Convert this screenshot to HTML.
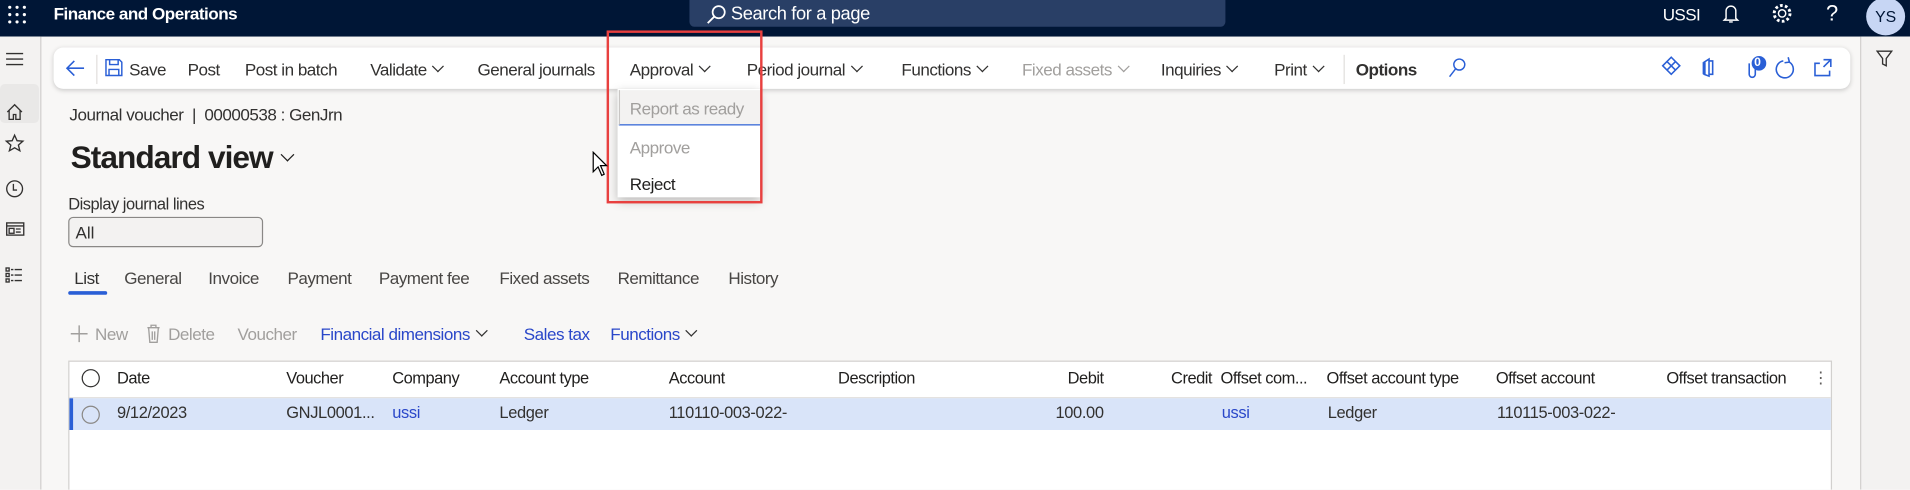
<!DOCTYPE html>
<html><head><meta charset="utf-8"><style>
*{margin:0;padding:0;box-sizing:border-box}
html,body{width:1910px;height:490px;overflow:hidden;background:#f8f7f6}
#s{position:absolute;left:0;top:0;width:1568px;height:402px;transform:scale(1.21811);transform-origin:0 0;font-family:"Liberation Sans",sans-serif;color:#323130;background:#f8f7f6;overflow:hidden}
.a{position:absolute;white-space:nowrap}
.t{font-size:14px;letter-spacing:-0.4px}
.g{color:#a19f9d}
.b{color:#2a47c9}
.ch{display:inline-block;width:7px;height:7px;border-right:1.3px solid currentColor;border-bottom:1.3px solid currentColor;transform:rotate(45deg);margin-left:6px;position:relative;top:-4px}
.hd{font-size:13.5px;letter-spacing:-0.4px;color:#201f1e;top:303px}
.rw{font-size:13.5px;letter-spacing:-0.3px;top:331px}
</style></head><body><div id="s">
<div class="a" style="left:0;top:0;width:1568px;height:30px;background:#001636"></div>
<svg class="a" style="left:6px;top:4px" width="16" height="16"><g fill="#fff"><circle cx="2" cy="2" r="1.3"/><circle cx="8" cy="2" r="1.3"/><circle cx="14" cy="2" r="1.3"/><circle cx="2" cy="8" r="1.3"/><circle cx="8" cy="8" r="1.3"/><circle cx="14" cy="8" r="1.3"/><circle cx="2" cy="14" r="1.3"/><circle cx="8" cy="14" r="1.3"/><circle cx="14" cy="14" r="1.3"/></g></svg>
<div class="a" style="left:44px;top:3px;color:#fff;font-weight:bold;font-size:14px;letter-spacing:-0.4px">Finance and Operations</div>
<div class="a" style="left:566px;top:0;width:440px;height:22px;background:#293f66;border-radius:0 0 4px 4px"></div>
<svg class="a" style="left:579px;top:3px" width="18" height="18"><circle cx="11" cy="7" r="5" fill="none" stroke="#fff" stroke-width="1.4"/><path d="M7.5 10.5L2 16" stroke="#fff" stroke-width="1.5"/></svg>
<div class="a" style="left:600px;top:3px;color:#fff;font-size:15px;letter-spacing:-0.3px">Search for a page</div>
<div class="a" style="left:1365px;top:4px;color:#fff;font-size:14px;letter-spacing:-0.5px">USSI</div>
<svg class="a" style="left:1413px;top:2px" width="16" height="18"><path d="M4 13V7a4 4 0 0 1 8 0v6l1.5 1.5h-11z M6.5 16h3" fill="none" stroke="#fff" stroke-width="1.2"/></svg>
<svg class="a" style="left:1454px;top:2px" width="18" height="18"><circle cx="9" cy="9" r="3" fill="none" stroke="#fff" stroke-width="1.2"/><circle cx="9" cy="9" r="6.5" fill="none" stroke="#fff" stroke-width="2.4" stroke-dasharray="2.2 1.9"/></svg>
<div class="a" style="left:1499px;top:1px;color:#fff;font-size:18px">?</div>
<div class="a" style="left:1532px;top:-2px;width:32px;height:31px;border-radius:50%;background:#c7d6f4;color:#001636;font-size:13px;text-align:center;line-height:31px">YS</div>
<div class="a" style="left:0;top:30px;width:34px;height:372px;background:#f3f2f1;border-right:1px solid #d2d0ce"></div>
<div class="a" style="left:0;top:69px;width:32px;height:32px;background:#e9e8e7;border-radius:4px"></div>
<svg class="a" style="left:0;top:30px" width="34" height="372" fill="none" stroke="#323130" stroke-width="1.1">
<path d="M5 14h14M5 18.5h14M5 23h14"/>
<path d="M6 62l6-6 6 6M7.5 60.5V68h3.5v-4h2v4h3.5v-7.5"/>
<path d="M12 81l2 4.5 4.8.4-3.7 3.2 1.2 4.7L12 91.3 7.7 93.8l1.2-4.7-3.7-3.2 4.8-.4z"/>
<circle cx="12" cy="125" r="6.5"/><path d="M11 121v5h3"/>
<rect x="5.5" y="153" width="14" height="10"/><path d="M5.5 155.5h14"/><rect x="7.5" y="157.5" width="4" height="4"/><path d="M13 158h4M13 160.5h4"/>
<rect x="5" y="190" width="2.5" height="2.5"/><rect x="5" y="194.5" width="2.5" height="2.5"/><rect x="5" y="199" width="2.5" height="2.5"/><path d="M9 191.3h2M12 191.3h6M9 195.8h2M12 195.8h6M9 200.3h2M12 200.3h6"/>
</svg>
<div class="a" style="left:1527px;top:30px;width:41px;height:372px;background:#f3f2f1;border-left:1px solid #d2d0ce"></div>
<svg class="a" style="left:1540px;top:40px" width="14" height="16"><path d="M1 2h12L8.5 8v6l-3-1.5V8z" fill="none" stroke="#323130" stroke-width="1.1"/></svg>
<div class="a" style="left:44px;top:39px;width:1475px;height:34px;background:#fff;border-radius:8px;box-shadow:0 1px 4px rgba(0,0,0,.18)"></div>
<svg class="a" style="left:53px;top:48px" width="18" height="16"><path d="M16 8H2M8 2L2 8l6 6" fill="none" stroke="#2a5fd6" stroke-width="1.3"/></svg>
<div class="a" style="left:79px;top:45px;width:1px;height:24px;background:#e1dfdd"></div>
<svg class="a" style="left:86px;top:48px" width="15" height="15"><path d="M1 1h11l2 2v11H1z M4 1v4h7V1 M3.5 14V9h8v5" fill="none" stroke="#2a5fd6" stroke-width="1.2"/></svg>
<div class="a t" style="left:106px;top:49px">Save</div>
<div class="a t" style="left:154px;top:49px">Post</div>
<div class="a t" style="left:201px;top:49px">Post in batch</div>
<div class="a t" style="left:304px;top:49px">Validate<span class="ch"></span></div>
<div class="a t" style="left:392px;top:49px">General journals</div>
<div class="a t" style="left:517px;top:49px">Approval<span class="ch"></span></div>
<div class="a t" style="left:613px;top:49px">Period journal<span class="ch"></span></div>
<div class="a t" style="left:740px;top:49px">Functions<span class="ch"></span></div>
<div class="a t g" style="left:839px;top:49px">Fixed assets<span class="ch"></span></div>
<div class="a t" style="left:953px;top:49px">Inquiries<span class="ch"></span></div>
<div class="a t" style="left:1046px;top:49px">Print<span class="ch"></span></div>
<div class="a" style="left:1103px;top:45px;width:1px;height:24px;background:#e1dfdd"></div>
<div class="a t" style="left:1113px;top:49px;font-weight:bold">Options</div>
<svg class="a" style="left:1188px;top:47px" width="16" height="17"><circle cx="10" cy="6" r="4.5" fill="none" stroke="#2a5fd6" stroke-width="1.2"/><path d="M7 9.5L2 16" stroke="#2a5fd6" stroke-width="1.2"/></svg>
<svg class="a" style="left:1364px;top:46px" width="150" height="20" fill="none" stroke="#2a5fd6" stroke-width="1.3">
<path d="M8 1l7 7-7 7-7-7z M4.5 4.5l7 7M11.5 4.5l-7 7"/>
<path d="M35 5l4-2.5v14L35 15z M39 4h3v11h-3" /><path d="M35 5v10" stroke-width="2.5"/>
<path d="M72 6v9a2.5 2.5 0 0 0 5 0V5" /><circle cx="80" cy="6" r="6" fill="#2a5fd6" stroke="none"/>
<path d="M100 4a7 7 0 1 0 5 1" /><path d="M104 1l1 4-4 .5"/>
<path d="M130 6h-4v10h12v-4M133 3h6v6M139 3l-6 6"/>
</svg>
<div class="a" style="left:1440px;top:46px;color:#fff;font-size:10px;font-weight:bold">0</div>
<div class="a t" style="left:57px;top:86px">Journal voucher &nbsp;| &nbsp;00000538 : GenJrn</div>
<div class="a" style="left:58px;top:114px;font-size:26px;font-weight:bold;letter-spacing:-0.8px;color:#201f1e">Standard view<span class="ch" style="width:8px;height:8px;top:-7px;border-width:1.3px;margin-left:8px"></span></div>
<div class="a" style="left:56px;top:160px;font-size:13.5px;letter-spacing:-0.4px">Display journal lines</div>
<div class="a" style="left:56px;top:178px;width:160px;height:25px;border:1px solid #8a8886;border-radius:4px;background:#f3f2f1;font-size:14px;padding:4px 5px">All</div>
<div class="a t" style="left:61px;top:220px">List</div>
<div class="a t" style="left:102px;top:220px;color:#484644">General</div>
<div class="a t" style="left:171px;top:220px;color:#484644">Invoice</div>
<div class="a t" style="left:236px;top:220px;color:#484644">Payment</div>
<div class="a t" style="left:311px;top:220px;color:#484644">Payment fee</div>
<div class="a t" style="left:410px;top:220px;color:#484644">Fixed assets</div>
<div class="a t" style="left:507px;top:220px;color:#484644">Remittance</div>
<div class="a t" style="left:598px;top:220px;color:#484644">History</div>
<div class="a" style="left:56px;top:239px;width:32px;height:3px;background:#2a5fd6;border-radius:2px"></div>
<svg class="a" style="left:58px;top:267px" width="14" height="14"><path d="M7 0v14M0 7h14" stroke="#a19f9d" stroke-width="1.2"/></svg>
<div class="a t g" style="left:78px;top:266px">New</div>
<svg class="a" style="left:120px;top:266px" width="12" height="16"><path d="M1 3h10M4 3V1h4v2M2 3l1 12h6l1-12M5 6v7M7 6v7" fill="none" stroke="#a19f9d" stroke-width="1.1"/></svg>
<div class="a t g" style="left:138px;top:266px">Delete</div>
<div class="a t g" style="left:195px;top:266px">Voucher</div>
<div class="a t b" style="left:263px;top:266px">Financial dimensions<span class="ch" style="color:#323130"></span></div>
<div class="a t b" style="left:430px;top:266px">Sales tax</div>
<div class="a t b" style="left:501px;top:266px">Functions<span class="ch" style="color:#323130"></span></div>
<div class="a" style="left:56px;top:296px;width:1448px;height:120px;background:#fff;border:1px solid #d2d0ce"></div>
<div class="a" style="left:57px;top:326px;width:1446px;height:1px;background:#e1dfdd"></div>
<div class="a" style="left:57px;top:327px;width:1446px;height:26px;background:#d9e4f9;border-left:3px solid #2a5fd6"></div>
<div class="a" style="left:67px;top:303px;width:15px;height:15px;border:1.2px solid #323130;border-radius:50%"></div>
<div class="a" style="left:67px;top:333px;width:15px;height:15px;border:1.2px solid #8a8886;border-radius:50%"></div>
<div class="a hd" style="left:96px">Date</div>
<div class="a hd" style="left:235px">Voucher</div>
<div class="a hd" style="left:322px">Company</div>
<div class="a hd" style="left:410px">Account type</div>
<div class="a hd" style="left:549px">Account</div>
<div class="a hd" style="left:688px">Description</div>
<div class="a hd" style="left:868px;width:38px;text-align:right">Debit</div>
<div class="a hd" style="left:950px;width:45px;text-align:right">Credit</div>
<div class="a hd" style="left:1002px">Offset com...</div>
<div class="a hd" style="left:1089px">Offset account type</div>
<div class="a hd" style="left:1228px">Offset account</div>
<div class="a hd" style="left:1368px">Offset transaction</div>
<div class="a hd" style="left:1488px;color:#605e5c">⋮</div>
<div class="a rw" style="left:96px">9/12/2023</div>
<div class="a rw" style="left:235px">GNJL0001...</div>
<div class="a rw b" style="left:322px">ussi</div>
<div class="a rw" style="left:410px">Ledger</div>
<div class="a rw" style="left:549px">110110-003-022-</div>
<div class="a rw" style="left:850px;width:56px;text-align:right">100.00</div>
<div class="a rw b" style="left:1003px">ussi</div>
<div class="a rw" style="left:1090px">Ledger</div>
<div class="a rw" style="left:1229px">110115-003-022-</div>
<div class="a" style="left:507px;top:73px;width:117px;height:89px;background:#fff;box-shadow:0 3px 8px rgba(0,0,0,.25)"></div>
<div class="a" style="left:508px;top:74px;width:116px;height:29px;background:#f3f2f1;border-bottom:1.5px solid #2a5fd6;border-left:1px solid #c8c6c4"></div>
<div class="a t g" style="left:517px;top:81px">Report as ready</div>
<div class="a t g" style="left:517px;top:113px">Approve</div>
<div class="a t" style="left:517px;top:143px;color:#201f1e">Reject</div>
<div class="a" style="left:498px;top:25px;width:128px;height:142px;border:2px solid #e8403f"></div>
<svg class="a" style="left:486px;top:124px" width="14" height="22"><path d="M1 1v16l4-4 3 7 2-1-3-7h5z" fill="#fff" stroke="#000" stroke-width="1"/></svg>
</div></body></html>
